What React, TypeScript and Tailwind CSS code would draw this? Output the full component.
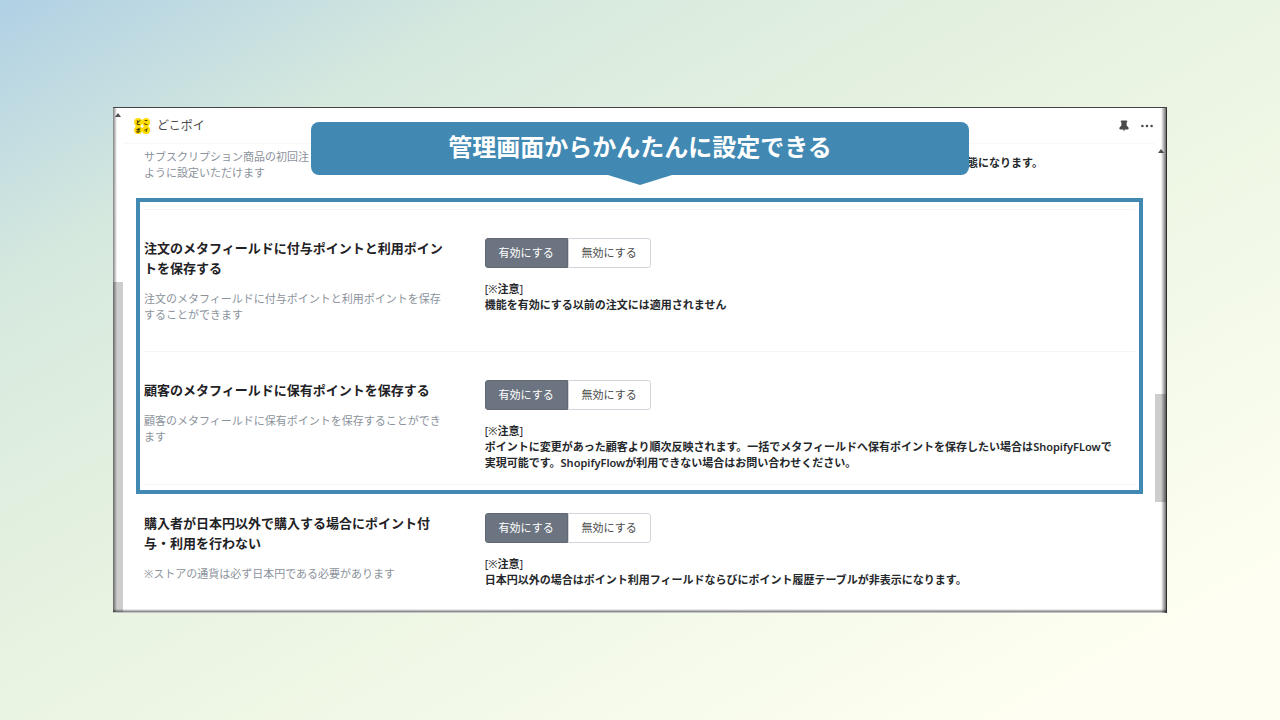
import { useState, type ReactNode } from "react";

function ArrowUp() {
  return (
    <svg viewBox="0 0 6 4" className="h-1 w-1.5" fill="#505050" aria-hidden="true">
      <path d="M3 0L6 4H0Z" />
    </svg>
  );
}

function AppLogo() {
  const dots: [number, number, string][] = [
    [4.2, 4.2, "ど"],
    [12, 4.2, "こ"],
    [4.2, 12, "ポ"],
    [12, 12, "イ"],
  ];
  return (
    <svg viewBox="0 0 16 16" className="size-4" aria-hidden="true">
      {dots.map(([x, y, t]) => (
        <g key={t}>
          <circle cx={x} cy={y} r="4.2" fill="#ffdc00" />
          <text
            x={x}
            y={y + 1.6}
            textAnchor="middle"
            fontSize="4.4"
            fontWeight="900"
            fill="#1a1600"
          >
            {t}
          </text>
        </g>
      ))}
    </svg>
  );
}

function Pin() {
  return (
    <svg viewBox="0 0 10 12" className="h-3 w-2.5" fill="#4a4a4a" aria-hidden="true">
      <path d="M2.6 0.5h4.8q0.9 0 0.9 0.9T7.6 2.6v2.8L9.3 7.2q0.5 0.7 0.3 1.5t-1 0.8H5.8L5 11.5 4.2 9.5H1.4q-0.8 0-1-0.8T0.7 7.2L2.4 5.4V2.6Q1.7 2.3 1.7 1.4T2.6 0.5Z" />
    </svg>
  );
}

function Dots() {
  return (
    <svg viewBox="0 0 12 4" className="h-1 w-3" fill="#4a4a4a" aria-hidden="true">
      <circle cx="1.4" cy="2" r="1.3" />
      <circle cx="6" cy="2" r="1.3" />
      <circle cx="10.6" cy="2" r="1.3" />
    </svg>
  );
}

function Toggle({ label }: { label: string }) {
  const [on, setOn] = useState(true);
  const base = "h-[30px] w-[83px] border text-[11px] leading-4";
  const active = "border-[#5f6873] bg-[#6b7480] text-white";
  const idle = "border-[#d3d5dd] bg-white text-[#4d4d4d]";
  return (
    <div role="group" aria-label={label} className="flex">
      <button
        type="button"
        aria-pressed={on}
        onClick={() => setOn(true)}
        className={`${base} rounded-l-[3px] ${on ? active : idle}`}
      >
        有効にする
      </button>
      <button
        type="button"
        aria-pressed={!on}
        onClick={() => setOn(false)}
        className={`${base} rounded-r-[3px] ${on ? idle : active}`}
      >
        無効にする
      </button>
    </div>
  );
}

function Setting({
  title,
  description,
  children,
}: {
  title: string;
  description: string;
  children: ReactNode;
}) {
  return (
    <div className="grid grid-cols-[11fr_21fr]">
      <div className="pr-9">
        <h2 className="text-[13px] leading-5 font-bold text-[#1f2225]">{title}</h2>
        <p className="mt-[13px] text-[11px] leading-4 text-[#8b929b]">{description}</p>
      </div>
      <div>
        <Toggle label={title} />
        <p className="mt-[13px] text-[11px] leading-4 font-bold text-[#25282b]">
          <span className="font-normal">[※</span>注意<span className="font-normal">]</span>
          <br />
          {children}
        </p>
      </div>
    </div>
  );
}

export default function App() {
  return (
    <div
      lang="ja"
      className="flex min-h-screen flex-col justify-center bg-[linear-gradient(to_bottom_right,#b0d0e4_0%,#d6e9de_20%,#e8f3e1_46%,#f3f9e8_68%,#fefff2_90%)] px-[113px] font-['Noto_Sans','Noto_Sans_CJK_JP',sans-serif]"
    >
      <main className="relative flex border-t border-[#444] bg-white">
        <div className="flex w-2.5 flex-col items-center">
          <div className="mt-[5px] h-[169px]">
            <ArrowUp />
          </div>
          <div className="w-full flex-1 bg-[#cdcdcd]" />
        </div>

        <div className="flex flex-1 flex-col">
          <header className="flex h-9 items-center border-b border-[#f8f8f8] pr-0.5 pl-[11px]">
            <AppLogo />
            <h1 className="ml-[7px] flex-1 text-xs text-[#4a4a4a]">どこポイ</h1>
            <button type="button" aria-label="ピン留め" className="mr-3">
              <Pin />
            </button>
            <button type="button" aria-label="メニュー">
              <Dots />
            </button>
          </header>

          <div className="pr-3 pb-[25px] pl-[13px]">
            <div className="flex justify-between pt-[5px] pr-[100px] pl-2 text-[11px] leading-4">
              <p className="text-[#8b929b]">
                サブスクリプション商品の初回注
                <br />
                ように設定いただけます
              </p>
              <p className="pt-1.5 font-bold text-[#25282b]">態になります。</p>
            </div>

            <section className="mt-[17px] border-4 border-[#4189b3] px-1 pt-[7px] pb-[5px]">
              <div className="border-t border-[#f5f5f7] pt-7 pb-7">
                <Setting
                  title="注文のメタフィールドに付与ポイントと利用ポイントを保存する"
                  description="注文のメタフィールドに付与ポイントと利用ポイントを保存することができます"
                >
                  機能を有効にする以前の注文には適用されません
                </Setting>
              </div>
              <div className="border-y border-[#f5f5f7] pt-7 pb-[13px]">
                <Setting
                  title="顧客のメタフィールドに保有ポイントを保存する"
                  description="顧客のメタフィールドに保有ポイントを保存することができます"
                >
                  ポイントに変更があった顧客より順次反映されます。一括でメタフィールドへ保有ポイントを保存したい場合は
                  <span className="font-semibold">ShopifyFLow</span>で
                  <br />
                  実現可能です。<span className="font-semibold">ShopifyFlow</span>
                  が利用できない場合はお問い合わせください。
                </Setting>
              </div>
            </section>

            <div className="px-2 pt-[19px]">
              <Setting
                title="購入者が日本円以外で購入する場合にポイント付与・利用を行わない"
                description="※ストアの通貨は必ず日本円である必要があります"
              >
                日本円以外の場合はポイント利用フィールドならびにポイント履歴テーブルが非表示になります。
              </Setting>
            </div>
          </div>
        </div>

        <div className="flex w-3 flex-col items-center">
          <div className="mt-[41px] h-[245px]">
            <ArrowUp />
          </div>
          <div className="h-[108px] w-full bg-[#cdcdcd]" />
        </div>

        <div className="pointer-events-none absolute inset-y-0 left-0 w-1 bg-linear-to-r from-[#00000080] to-transparent" />
        <div className="pointer-events-none absolute inset-x-0 bottom-0 h-1 border-b border-[#c4c4c4] bg-linear-to-t from-[#00000088] to-transparent" />
        <div className="pointer-events-none absolute inset-y-0 right-0 w-1.5 border-r border-[#2c2c30] bg-linear-to-l from-[#00000090] to-transparent" />

        <div className="absolute inset-x-0 top-[14px] flex flex-col items-center">
          <p className="w-5/8 rounded-lg bg-[#4189b3] pt-2 pb-3 text-center text-2xl leading-[33px] font-bold text-white">
            管理画面からかんたんに設定できる
          </p>
          <svg viewBox="0 0 64 10" className="h-2.5 w-16" fill="#4189b3" aria-hidden="true">
            <path d="M0 0H64L32 10Z" />
          </svg>
        </div>
      </main>
    </div>
  );
}
